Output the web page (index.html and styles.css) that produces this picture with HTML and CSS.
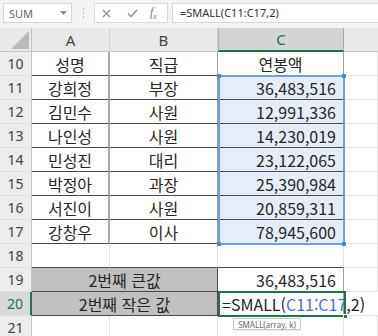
FILE: index.html
```html
<!DOCTYPE html>
<html lang="ko">
<head>
<meta charset="utf-8">
<link rel="stylesheet" href="styles.css">
</head>
<body>
<div class="toolbar">
  <div class="namebox"><span>SUM</span><svg class="dd" width="7" height="4" viewBox="0 0 7 4"><path d="M0 0h7L3.5 4z" fill="#8a8a8a"/></svg></div>
  <div class="sep"><i></i><i></i><i></i></div>
  <div class="btns">
    <svg class="ic-x" width="9" height="9" viewBox="0 0 9 9"><path d="M1 1L8 8M8 1L1 8" stroke="#8c8c8c" stroke-width="1.3" fill="none"/></svg>
    <svg class="ic-ok" width="11" height="9" viewBox="0 0 11 9"><path d="M1 4.5L4 7.5L10 1" stroke="#8c8c8c" stroke-width="1.5" fill="none"/></svg>
    <span class="fx">f<sub>x</sub></span>
  </div>
  <div class="formula">=SMALL(C11:C17,2)</div>
</div>
<div class="sheet">
  <div class="corner"><svg width="18" height="18" viewBox="0 0 18 18"><path d="M18 0V18H0z" fill="#b9b9b9"/></svg></div>
  <div class="ch">A</div><div class="ch">B</div><div class="ch act">C</div><div class="ch d"></div>

  <div class="rh">10</div><div class="t a">성명</div><div class="t b">직급</div><div class="t c">연봉액</div><div class="g"></div>
  <div class="rh">11</div><div class="t a">강희정</div><div class="t b">부장</div><div class="t c num sel">36,483,516</div><div class="g"></div>
  <div class="rh">12</div><div class="t a">김민수</div><div class="t b">사원</div><div class="t c num sel">12,991,336</div><div class="g"></div>
  <div class="rh">13</div><div class="t a">나인성</div><div class="t b">사원</div><div class="t c num sel">14,230,019</div><div class="g"></div>
  <div class="rh">14</div><div class="t a">민성진</div><div class="t b">대리</div><div class="t c num sel">23,122,065</div><div class="g"></div>
  <div class="rh">15</div><div class="t a">박정아</div><div class="t b">과장</div><div class="t c num sel">25,390,984</div><div class="g"></div>
  <div class="rh">16</div><div class="t a">서진이</div><div class="t b">사원</div><div class="t c num sel">20,859,311</div><div class="g"></div>
  <div class="rh">17</div><div class="t a">강창우</div><div class="t b">이사</div><div class="t c num sel">78,945,600</div><div class="g"></div>
  <div class="rh">18</div><div class="e dk"></div><div class="e dk"></div><div class="e dk"></div><div class="g"></div>
  <div class="rh">19</div><div class="m">2번째 큰값</div><div class="t c num">36,483,516</div><div class="g"></div>
  <div class="rh act">20</div><div class="m">2번째 작은 값</div><div class="t c fcell"><span>=SMALL(<span class="ref">C11:C17</span>,2)</span></div><div class="g clear"></div>
  <div class="rh">21</div><div class="g"></div><div class="g"></div><div class="g"></div><div class="g"></div>

  <div class="selbox"><i class="h tl"></i><i class="h tr"></i><i class="h bl"></i><i class="h br"></i></div>
  <div class="active"><i class="gh"></i></div>
  <div class="tip">SMALL(array, k)</div>
</div>
</body>
</html>
```

FILE: styles.css
```css
* { box-sizing: border-box; margin: 0; padding: 0; }
body {
  margin: 0;
  width: 378px;
  height: 336px;
  overflow: hidden;
  background: #fff;
  font-family: "Noto Sans CJK KR", "Noto Sans", sans-serif;
  color: #262626;
}
.toolbar {
  height: 28px;
  background: #f3f3f3;
  display: flex;
  align-items: flex-start;
  padding-top: 3px;
}
.namebox {
  margin-left: 3px;
  width: 69px;
  height: 20px;
  background: #fff;
  border: 1px solid #d6d6d6;
  display: flex;
  align-items: center;
  justify-content: space-between;
  padding: 0 4px 0 5px;
  font: 11px "Noto Sans", sans-serif;
  color: #666;
}
.sep {
  width: 22px;
  height: 20px;
  display: flex;
  flex-direction: column;
  align-items: center;
  justify-content: center;
  gap: 2px;
}
.sep i { width: 1px; height: 2px; background: #b8b8b8; }
.btns {
  width: 74px;
  height: 20px;
  background: #fff;
  border: 1px solid #dadada;
  display: flex;
  align-items: center;
  padding-left: 7px;
}
.ic-ok { margin-left: 16px; }
.fx {
  margin-left: 12px;
  font: italic 12px "Liberation Serif", serif;
  color: #7a7a7a;
}
.fx sub { font-size: 8px; }
.formula {
  margin-left: 4px;
  flex: 1;
  height: 20px;
  background: #fff;
  border: 1px solid #d6d6d6;
  border-right: none;
  padding-left: 7px;
  font: 11px "Noto Sans", sans-serif;
  line-height: 18px;
  color: #333;
}
.sheet {
  position: relative;
  display: grid;
  grid-template-columns: 32px 78px 108px 126px 1fr;
  grid-auto-rows: 24px;
}
.sheet > div {
  display: flex;
  align-items: center;
  justify-content: center;
  font-size: 16px;
  white-space: nowrap;
}
.corner {
  background: #e9e9e9;
  border-right: 1px solid #c4c4c4;
  border-bottom: 1px solid #c4c4c4;
  padding: 4px 2px 2px 0;
  align-items: flex-end !important;
  justify-content: flex-end !important;
}
.corner svg { display: block; }
.ch {
  background: #e9e9e9;
  border-right: 1px solid #cfcfcf;
  border-bottom: 1px solid #c4c4c4;
  font: 14px "Noto Sans", sans-serif;
  color: #444;
}
.sheet > .ch { font-size: 15px; }
.ch.act {
  background: #d3d3d3;
  border-left: 1px solid #b5b5b5;
  border-right: 1px solid #a8a8a8;
  border-bottom: 2px solid #217346;
  color: #217346;
}
.ch.d { border-right: none; }
.rh {
  background: #ececec;
  border-right: 1px solid #c4c4c4;
  border-bottom: 1px solid #dedede;
  font-family: "Noto Sans", sans-serif;
  color: #444;
}
.sheet > .rh { font-size: 14px; }
.rh.act {
  background: #d9d9d9;
  color: #217346;
  border-right: 2px solid #217346;
}
.t { border-bottom: 1px solid #4a4a4a; }
.t.a { border-right: 2px solid #ababab; }
.t.b { border-right: 1px solid #a0a0a0; }
.t.c { border-right: 1px solid #a0a0a0; }
.sheet > .num {
  justify-content: flex-end;
  padding-right: 7px;
}
.sel { background: #e7edf8; }
.g {
  border-right: 1px solid #e1e1e1;
  border-bottom: 1px solid #e1e1e1;
}
.e {
  border-right: 1px solid #e1e1e1;
}
.e.dk { border-bottom: 1px solid #4a4a4a; }
.m {
  grid-column: span 2;
  background: #c0c0c0;
  border-bottom: 1px solid #4a4a4a;
  border-right: 1px solid #4a4a4a;
}
.sheet > .fcell {
  justify-content: flex-start;
  padding-left: 4px;
  overflow: visible;
  color: #222;
  font-size: 16px;
}
.ref { color: #3b74d0; }
.sheet > .clear { border-right: none; }
.selbox {
  position: absolute;
  left: 218px;
  top: 47px;
  width: 127px;
  height: 170px;
  border: 2px solid #6e9de6;
}
.h {
  position: absolute;
  width: 4px;
  height: 4px;
  background: #4d86e0;
}
.h.tl { left: -3px; top: -3px; }
.h.tr { right: -3px; top: -3px; }
.h.bl { left: -3px; bottom: -3px; }
.h.br { right: -3px; bottom: -3px; }
.active {
  position: absolute;
  left: 218px;
  top: 263px;
  width: 128px;
  height: 26px;
  border: 2px solid #217346;
}
.gh {
  position: absolute;
  right: -4px;
  bottom: -4px;
  width: 5px;
  height: 5px;
  background: #217346;
  border: 1px solid #fff;
}
.sheet > .tip {
  position: absolute;
  left: 233px;
  top: 290px;
  width: 68px;
  height: 12px;
  background: #fff;
  border: 1px solid #c8c8c8;
  font: 8px "Noto Sans", sans-serif;
  color: #666;
  box-shadow: 0 1px 1px rgba(0,0,0,0.08);
}
```
